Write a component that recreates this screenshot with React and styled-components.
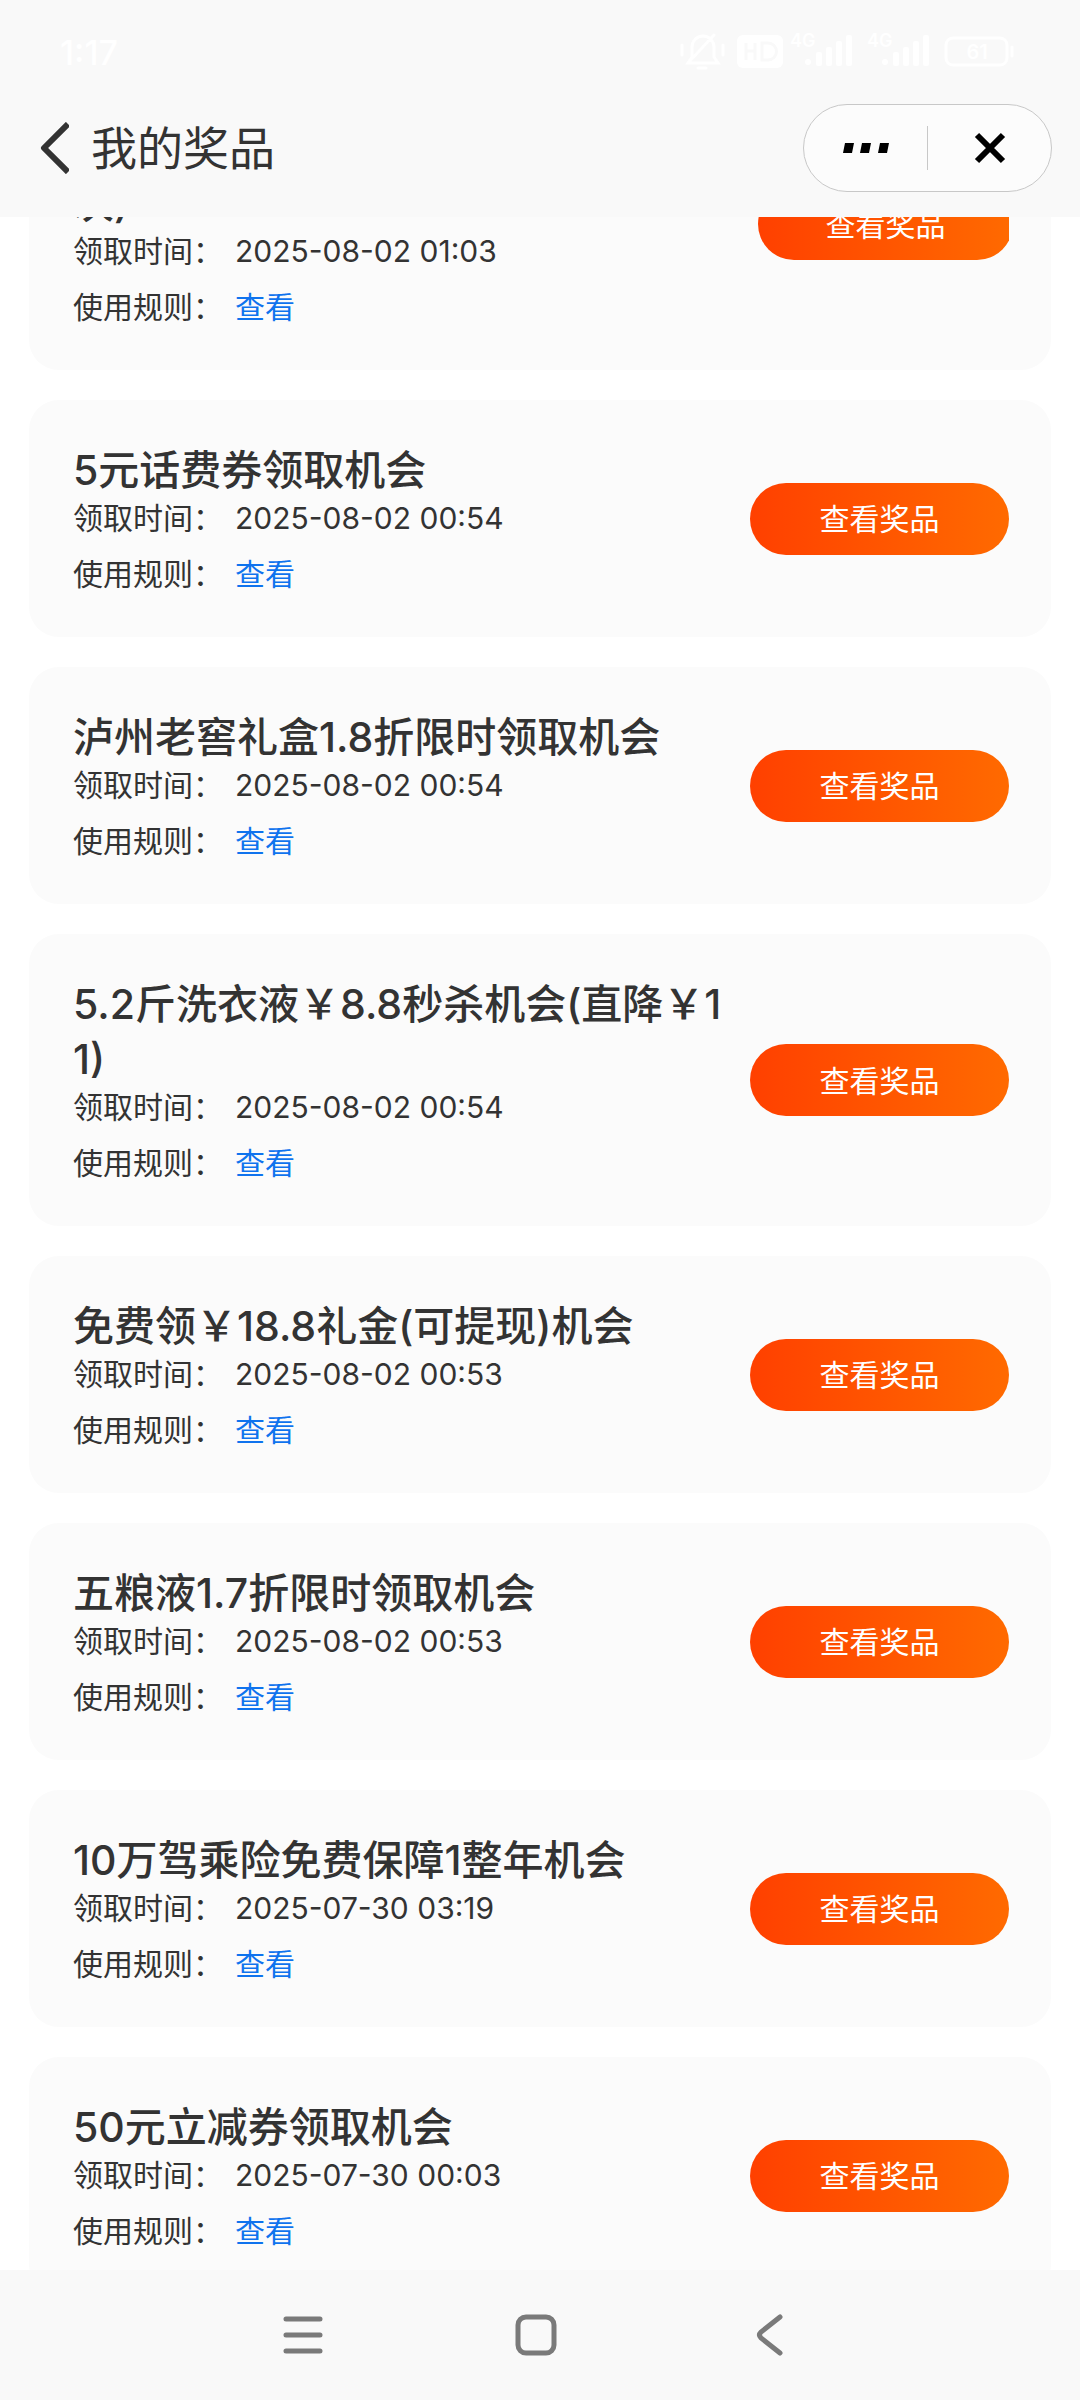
import React, { useLayoutEffect, useRef } from "react";
import styled, { createGlobalStyle } from "styled-components";

const GlobalStyle = createGlobalStyle`
  * {
    box-sizing: border-box;
  }

  body {
    margin: 0;
    background: #fff;
    color: #333;
    font-family: Inter, "Noto Sans CJK SC", sans-serif;
  }

  button {
    padding: 0;
    border: none;
    background: none;
    color: inherit;
    font-family: inherit;
    cursor: pointer;
  }
`;

const Screen = styled.div`
  display: flex;
  flex-direction: column;
  height: 100vh;
`;

const TopArea = styled.header`
  flex: none;
  background: #f9f9f9;
`;

const StatusBar = styled.div`
  display: flex;
  align-items: center;
  justify-content: space-between;
  height: 104px;
  padding: 0 66px 0 60px;
  color: #fff;
`;

const Clock = styled.span`
  font-size: 34px;
  font-weight: 500;
`;

const TitleBar = styled.div`
  display: flex;
  align-items: center;
  justify-content: space-between;
  height: 113px;
  padding: 0 28px 25px 40px;
`;

const TitleGroup = styled.div`
  display: flex;
  align-items: center;
  gap: 22px;
`;

const IconButton = styled.button`
  display: flex;
  align-items: center;
  justify-content: center;
`;

const PageTitle = styled.h1`
  margin: 0;
  font-size: 46px;
  line-height: 60px;
  font-weight: 400;
`;

const Capsule = styled.div`
  display: flex;
  align-items: center;
  height: 88px;
  width: 249px;
  border: 1px solid #c8c8c8;
  border-radius: 44px;
  background: #fcfcfc;

  ${IconButton} {
    flex: 1;
    height: 100%;
  }
`;

const CapsuleLine = styled.span`
  width: 1px;
  height: 44px;
  background: #c8c8c8;
`;

const Scroller = styled.main`
  flex: 1;
  min-height: 0;
  overflow-y: auto;
  scrollbar-width: none;
`;

const PrizeList = styled.ul`
  display: flex;
  flex-direction: column;
  gap: 30px;
  margin: 0;
  padding: 30px 29px;
  list-style: none;
`;

const Card = styled.li`
  display: flex;
  align-items: center;
  justify-content: space-between;
  padding: 43px 42px 43px 44px;
  border-radius: 30px;
  background: #fbfbfb;
`;

const Info = styled.div`
  flex: 0 1 661px;
`;

const PrizeName = styled.h2`
  margin: 0;
  font-size: 41px;
  line-height: 55px;
  font-weight: 500;
  word-break: break-all;
`;

const Row = styled.p`
  display: flex;
  margin: 0;
  font-size: 30px;
  line-height: 40px;

  & + & {
    margin-top: 16px;
  }
`;

const Label = styled.span`
  width: 162px;
`;

const RuleLink = styled.a`
  color: #0f73ee;
  text-decoration: none;
`;

const Action = styled.div`
  flex: none;
  width: ${props => (props.$narrow ? "251px" : "259px")};
  overflow: hidden;
`;

const ViewButton = styled.button`
  display: block;
  width: ${props => (props.$narrow ? "255px" : "259px")};
  height: 72px;
  padding-bottom: 3px;
  border-radius: 36px;
  background: linear-gradient(90deg, #ff4000 0%, #ff6a00 100%);
  color: #fff;
  font-size: 30px;
`;

const NavBar = styled.nav`
  flex: none;
  display: flex;
  align-items: center;
  justify-content: center;
  gap: 173px;
  height: 130px;
  padding-right: 8px;
  background: #f9f9f9;
  color: #7a7a7a;

  ${IconButton} {
    width: 60px;
    height: 60px;
  }
`;

const prizes = [
  { name: "5元话费券限时免费领取(每人仅限一次)", time: "2025-08-02 01:03", narrow: true },
  { name: "5元话费券领取机会", time: "2025-08-02 00:54" },
  { name: "泸州老窖礼盒1.8折限时领取机会", time: "2025-08-02 00:54" },
  { name: "5.2斤洗衣液￥8.8秒杀机会(直降￥11)", time: "2025-08-02 00:54" },
  { name: "免费领￥18.8礼金(可提现)机会", time: "2025-08-02 00:53" },
  { name: "五粮液1.7折限时领取机会", time: "2025-08-02 00:53" },
  { name: "10万驾乘险免费保障1整年机会", time: "2025-07-30 03:19" },
  { name: "50元立减券领取机会", time: "2025-07-30 00:03" }
];

const SCROLL_OFFSET = 169;

const Signal = ({ x }) => (
  <g>
    <text x={x} y="18" fontSize="18" fontWeight="600" fill="#fff">
      4G
    </text>
    <circle cx={x + 18} cy="33" r="3" fill="#fff" />
    {[14, 19, 25, 31].map((h, i) => (
      <rect key={h} x={x + 26 + i * 10} y={37 - h} width="6" height={h} rx="2" fill="#fff" />
    ))}
  </g>
);

const StatusIcons = () => (
  <svg width="334" height="46" viewBox="0 0 334 46" fill="none" stroke="#fff" strokeWidth="3">
    <path d="M8 34h30l-4-6V18a11 11 0 0 0-22 0v10zM8 34L34 6M18 39h8M2 16v10M43 16v10" strokeLinecap="round" />
    <rect x="57" y="6" width="46" height="33" rx="6" fill="#fff" stroke="none" />
    <path d="M66 14v17M66 22h9M75 14v17M82 14h6a8 8 0 0 1 0 17h-6z" stroke="#f9f9f9" />
    <g stroke="none">
      <Signal x={110} />
      <Signal x={187} />
    </g>
    <rect x="266" y="9" width="61" height="27" rx="7" />
    <path d="M332 18v9" strokeLinecap="round" />
    <text x="297" y="30" fontSize="20" fontWeight="600" textAnchor="middle" fill="#fff" stroke="none">
      61
    </text>
  </svg>
);

const PrizeCard = ({ name, time, narrow }) => (
  <Card>
    <Info>
      <PrizeName>{name}</PrizeName>
      <Row>
        <Label>领取时间：</Label>
        <time>{time}</time>
      </Row>
      <Row>
        <Label>使用规则：</Label>
        <RuleLink href="#rules">查看</RuleLink>
      </Row>
    </Info>
    <Action $narrow={narrow}>
      <ViewButton type="button" $narrow={narrow}>
        查看奖品
      </ViewButton>
    </Action>
  </Card>
);

const App = () => {
  const scroller = useRef(null);

  useLayoutEffect(() => {
    scroller.current.scrollTop = SCROLL_OFFSET;
  }, []);

  return (
    <Screen lang="zh-CN">
      <GlobalStyle />
      <TopArea>
        <StatusBar>
          <Clock>1:17</Clock>
          <StatusIcons />
        </StatusBar>
        <TitleBar>
          <TitleGroup>
            <IconButton type="button" aria-label="返回">
              <svg width="29" height="52" viewBox="0 0 29 52" fill="none" stroke="#333" strokeWidth="6">
                <path d="M28 2L4 26l24 24" strokeLinejoin="round" />
              </svg>
            </IconButton>
            <PageTitle>我的奖品</PageTitle>
          </TitleGroup>
          <Capsule>
            <IconButton type="button" aria-label="更多">
              <svg width="48" height="12" viewBox="0 0 48 12" fill="#000">
                <path d="M3 1h9l-2 10H1zM20 1h9l-2 10h-9zM38 1h9l-2 10h-9z" />
              </svg>
            </IconButton>
            <CapsuleLine />
            <IconButton type="button" aria-label="关闭">
              <svg width="32" height="32" viewBox="0 0 32 32" stroke="#000" strokeWidth="6">
                <path d="M3 3l26 26M29 3L3 29" />
              </svg>
            </IconButton>
          </Capsule>
        </TitleBar>
      </TopArea>
      <Scroller ref={scroller}>
        <PrizeList>
          {prizes.map(prize => (
            <PrizeCard key={prize.name} {...prize} />
          ))}
        </PrizeList>
      </Scroller>
      <NavBar>
        <IconButton type="button" aria-label="最近任务">
          <svg width="40" height="40" viewBox="0 0 40 40" stroke="currentColor" strokeWidth="5" strokeLinecap="round">
            <path d="M3 4h34M3 20h34M3 36h34" />
          </svg>
        </IconButton>
        <IconButton type="button" aria-label="主屏幕">
          <svg width="42" height="42" viewBox="0 0 42 42" fill="none" stroke="currentColor" strokeWidth="5">
            <rect x="3" y="3" width="36" height="36" rx="8" />
          </svg>
        </IconButton>
        <IconButton type="button" aria-label="返回上一级">
          <svg width="28" height="42" viewBox="0 0 28 42" fill="none" stroke="currentColor" strokeWidth="5">
            <path d="M25 3L6 18q-3 3 0 6l19 15" strokeLinecap="round" />
          </svg>
        </IconButton>
      </NavBar>
    </Screen>
  );
};

export default App;
